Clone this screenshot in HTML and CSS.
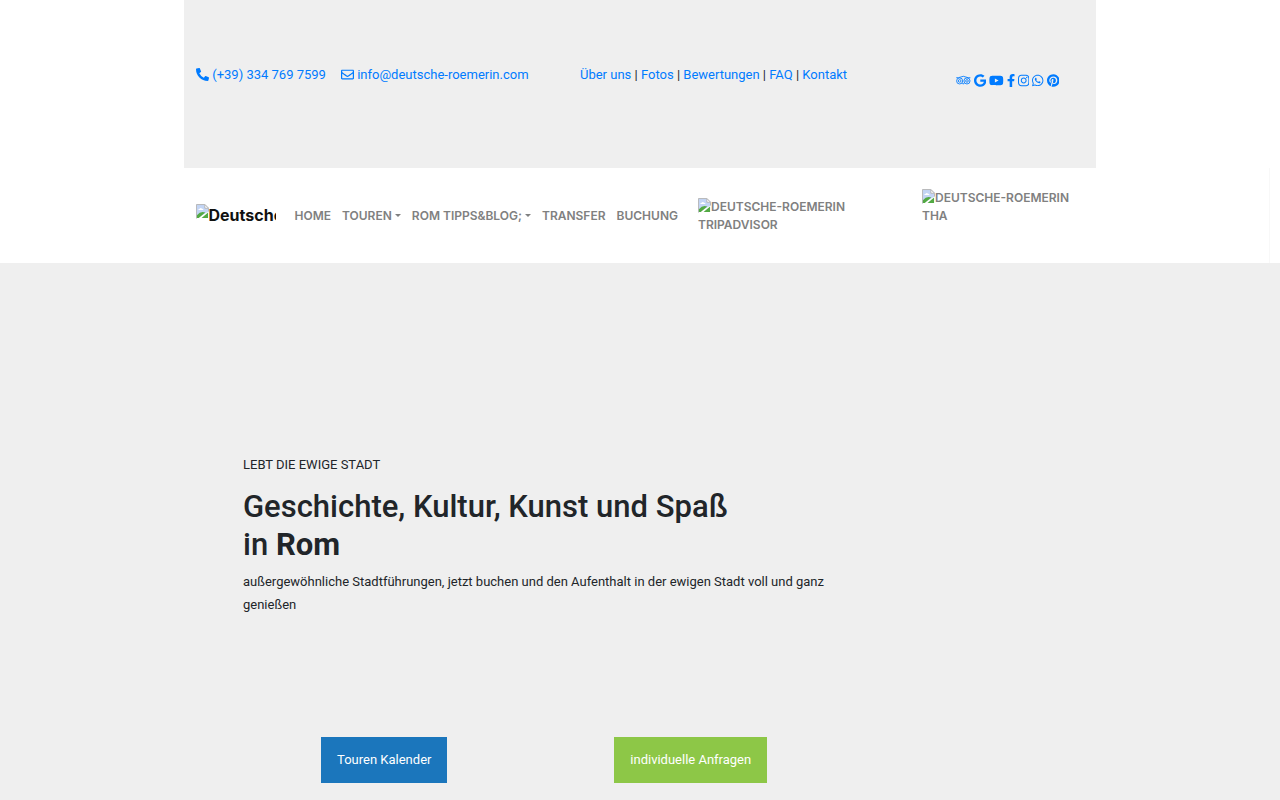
FILE: index.html
```
<!DOCTYPE html>
<html lang="de">
<head>
    <meta charset="UTF-8">
    <meta name="viewport" content="width=device-width, initial-scale=1.0">
    <title>Deutsche Roemerin</title>
    <link rel="stylesheet" href="styles.css">
</head>
<body>
    <!-- broken image symbol, used by the logo and the badges -->
    <svg class="sprite" aria-hidden="true">
        <symbol id="broken" viewBox="0 0 14 16">
            <path d="M.5 15.500V.5h9l4 4V8" fill="#c3d5f5" stroke="#b4b4b4"/>
            <path d="M2.500 6.500q0-1.500 1.500-1.500 1-1.500 2.500 0 1.500 0 1.500 1.500z" fill="#fff"/>
            <path d="M1 15v-3q4-5 9-3l-7 6z" fill="#52a943"/>
            <path d="M9.500.5v4h4z" fill="#fff" stroke="#b4b4b4"/>
            <path d="M6 15l7-6v6z" fill="#52a943"/>
        </symbol>
    </svg>

    <div class="container topbar">
        <div class="contact">
            <a href="tel:+393347697599"><svg class="icon" viewBox="0 0 512 512"><path d="M497.390 361.800l-112-48a24 24 0 0 0-28 6.900l-49.600 60.600A370.660 370.660 0 0 1 130.600 204.110l60.600-49.600a23.940 23.940 0 0 0 6.900-28l-48-112A24.160 24.160 0 0 0 122.600.61l-104 24A24 24 0 0 0 0 48c0 256.500 207.900 464 464 464a24 24 0 0 0 23.400-18.600l24-104a24.290 24.290 0 0 0-14.010-27.600z"/></svg> (+39) 334 769 7599</a>
            <a href="mailto:info@deutsche-roemerin.com"><svg class="icon" viewBox="0 0 512 512"><path d="M464 64H48C21.490 64 0 85.490 0 112v288c0 26.510 21.490 48 48 48h416c26.510 0 48-21.490 48-48V112c0-26.510-21.490-48-48-48zm0 48v40.805c-22.422 18.259-58.168 46.651-134.587 106.490-16.841 13.247-50.201 45.072-73.413 44.701-23.208.375-56.579-31.459-73.413-44.701C106.180 199.465 70.425 171.067 48 152.805V112h416zM48 400V214.398c22.914 18.251 55.409 43.862 104.938 82.646 21.857 17.205 60.134 55.186 103.062 54.955 42.717.231 80.509-37.199 103.053-54.947 49.528-38.783 82.032-64.401 104.947-82.653V400H48z"/></svg> info@deutsche-roemerin.com</a>
        </div>
        <div class="links">
            <a href="#">Über uns</a> | <a href="#">Fotos</a> | <a href="#">Bewertungen</a> | <a href="#">FAQ</a> | <a href="#">Kontakt</a>
        </div>
        <div class="social">
            <a href="#" aria-label="Tripadvisor"><svg class="icon" viewBox="0 0 576 512"><g fill="none" stroke="currentColor" stroke-width="34"><circle cx="144" cy="273" r="120"/><circle cx="432" cy="273" r="120"/><circle cx="144" cy="273" r="52"/><circle cx="432" cy="273" r="52"/><path d="M10 146h85q193-110 386 0h85M250 350l38 52 38-52"/></g></svg></a>
            <a href="#" aria-label="Google"><svg class="icon" viewBox="0 0 488 512"><path d="M488 261.800C488 403.300 391.100 504 248 504 110.800 504 0 393.200 0 256S110.800 8 248 8c66.800 0 123 24.500 166.300 64.900l-67.500 64.900C258.500 52.600 94.300 116.600 94.300 256c0 86.500 69.100 156.600 153.700 156.600 98.200 0 135-70.400 140.800-106.900H248v-85.300h236.100c2.300 12.700 3.900 24.900 3.900 41.400z"/></svg></a>
            <a href="#" aria-label="YouTube"><svg class="icon" viewBox="0 0 576 512"><path d="M549.655 124.083c-6.281-23.650-24.787-42.276-48.284-48.597C458.781 64 288 64 288 64S117.220 64 74.629 75.486c-23.497 6.322-42.003 24.947-48.284 48.597-11.412 42.867-11.412 132.305-11.412 132.305s0 89.438 11.412 132.305c6.281 23.650 24.787 41.500 48.284 47.821C117.220 448 288 448 288 448s170.780 0 213.371-11.486c23.497-6.321 42.003-24.171 48.284-47.821 11.412-42.867 11.412-132.305 11.412-132.305s0-89.438-11.412-132.305zm-317.510 213.508V175.185l142.739 81.205-142.739 81.201z"/></svg></a>
            <a href="#" aria-label="Facebook"><svg class="icon" viewBox="0 0 320 512"><path d="M279.140 288l14.220-92.660h-88.910v-60.130c0-25.350 12.420-50.060 52.240-50.060h40.420V6.260S260.430 0 225.360 0c-73.220 0-121.080 44.380-121.080 124.720v70.620H22.890V288h81.390v224h100.170V288z"/></svg></a>
            <a href="#" aria-label="Instagram"><svg class="icon" viewBox="0 0 448 512"><path d="M224.100 141c-63.600 0-114.900 51.300-114.900 114.900s51.300 114.900 114.900 114.900S339 319.500 339 255.900 287.700 141 224.100 141zm0 189.600c-41.100 0-74.700-33.500-74.700-74.700s33.500-74.700 74.700-74.700 74.700 33.500 74.700 74.700-33.600 74.700-74.700 74.700zm146.400-194.300c0 14.900-12 26.800-26.800 26.800-14.900 0-26.800-12-26.800-26.800s12-26.800 26.800-26.800 26.800 12 26.800 26.800zm76.100 27.200c-1.700-35.900-9.900-67.700-36.200-93.900-26.200-26.200-58-34.400-93.900-36.200-37-2.100-147.900-2.100-184.900 0-35.800 1.700-67.600 9.900-93.900 36.100s-34.400 58-36.200 93.900c-2.100 37-2.100 147.900 0 184.900 1.700 35.900 9.900 67.700 36.200 93.900s58 34.400 93.900 36.200c37 2.100 147.900 2.100 184.900 0 35.900-1.700 67.700-9.900 93.900-36.200 26.200-26.200 34.400-58 36.200-93.900 2.100-37 2.100-147.800 0-184.800zM398.800 388c-7.800 19.600-22.900 34.700-42.600 42.600-29.500 11.700-99.500 9-132.100 9s-102.700 2.600-132.100-9c-19.600-7.800-34.700-22.900-42.600-42.600-11.700-29.500-9-99.500-9-132.100s-2.600-102.700 9-132.100c7.800-19.600 22.900-34.700 42.600-42.600 29.500-11.700 99.500-9 132.100-9s102.700-2.600 132.100 9c19.600 7.800 34.700 22.900 42.600 42.600 11.700 29.500 9 99.500 9 132.100s2.700 102.700-9 132.100z"/></svg></a>
            <a href="#" aria-label="WhatsApp"><svg class="icon" viewBox="0 0 448 512"><path d="M380.900 97.100C339 55.100 283.200 32 223.900 32c-122.400 0-222 99.600-222 222 0 39.100 10.200 77.300 29.600 111L0 480l117.700-30.900c32.400 17.700 68.900 27 106.100 27h.1c122.300 0 224.100-99.600 224.100-222 0-59.300-25.200-115-67.100-157zm-157 341.600c-33.200 0-65.700-8.900-94-25.700l-6.700-4-69.800 18.300L72 359.200l-4.400-7c-18.500-29.400-28.200-63.300-28.200-98.200 0-101.700 82.800-184.500 184.600-184.500 49.300 0 95.600 19.200 130.400 54.100 34.800 34.900 56.200 81.200 56.100 130.500 0 101.800-84.900 184.600-186.600 184.600zm101.200-138.200c-5.500-2.800-32.800-16.200-37.900-18-5.100-1.900-8.800-2.800-12.500 2.800-3.700 5.600-14.300 18-17.600 21.800-3.200 3.700-6.500 4.200-12 1.400-32.600-16.300-54-29.100-75.500-66-5.700-9.800 5.700-9.100 16.300-30.300 1.800-3.700.9-6.900-.5-9.700-1.400-2.800-12.500-30.100-17.100-41.200-4.500-10.800-9.100-9.300-12.500-9.500-3.200-.2-6.900-.2-10.600-.2-3.700 0-9.700 1.400-14.800 6.900-5.100 5.600-19.400 19-19.400 46.300 0 27.300 19.900 53.700 22.600 57.400 2.800 3.700 39.100 59.700 94.800 83.800 35.200 15.200 49 16.500 66.600 13.900 10.700-1.600 32.800-13.400 37.400-26.400 4.600-13 4.600-24.100 3.200-26.400-1.300-2.500-5-3.900-10.500-6.600z"/></svg></a>
            <a href="#" aria-label="Pinterest"><svg class="icon" viewBox="0 0 496 512"><path d="M496 256c0 137-111 248-248 248-25.600 0-50.200-3.900-73.400-11.100 10.100-16.500 25.200-43.500 30.800-65 3-11.600 15.400-59 15.400-59 8.100 15.400 31.700 28.500 56.800 28.500 74.800 0 128.700-68.800 128.700-154.300 0-81.900-66.900-143.200-152.900-143.200-107 0-163.900 71.800-163.900 150.100 0 36.400 19.400 81.700 50.300 96.100 4.700 2.200 7.200 1.200 8.300-3.300.8-3.400 5-20.300 6.900-28.100.6-2.500.3-4.700-1.700-7.100-10.100-12.500-18.300-35.300-18.300-56.600 0-54.700 41.400-107.600 112-107.600 60.900 0 103.600 41.500 103.600 100.900 0 67.100-33.900 113.600-78 113.600-24.300 0-42.600-20.100-36.700-44.800 7-29.500 20.500-61.300 20.500-82.600 0-19-10.200-34.900-31.400-34.900-24.900 0-44.900 25.700-44.900 60.200 0 22 7.400 36.800 7.400 36.800s-24.500 103.800-29 123.200c-5 21.400-3 51.600-.9 71.200C65.400 450.900 0 361.100 0 256 0 119 111 8 248 8s248 111 248 248z"/></svg></a>
        </div>
    </div>

    <header class="header">
        <nav class="container navbar">
            <a class="brand" href="#"><svg class="broken"><use href="#broken"/></svg>Deutsche</a>
            <ul class="menu">
                <li><a href="#">Home</a></li>
                <li><a class="dropdown" href="#">Touren</a></li>
                <li><a class="dropdown" href="#">Rom Tipps&amp;Blog;</a></li>
                <li><a href="#">Transfer</a></li>
                <li><a href="#">Buchung</a></li>
            </ul>
            <a class="badge" href="#"><svg class="broken"><use href="#broken"/></svg>Deutsche-Roemerin Tripadvisor</a>
            <a class="badge badge-top" href="#"><svg class="broken"><use href="#broken"/></svg>Deutsche-Roemerin THA</a>
        </nav>
    </header>

    <main class="hero">
        <div class="container">
            <div class="hero-text">
                <p class="subtitle">LEBT DIE EWIGE STADT</p>
                <h1>Geschichte, Kultur, Kunst und Spaß<br>in <strong>Rom</strong></h1>
                <p class="intro">außergewöhnliche Stadtführungen, jetzt buchen und den Aufenthalt in der ewigen Stadt voll und ganz genießen</p>
                <div class="buttons">
                    <a class="btn btn-blue" href="#">Touren Kalender</a>
                    <a class="btn btn-green" href="#">individuelle Anfragen</a>
                </div>
            </div>
        </div>
    </main>
</body>
</html>
```
FILE: styles.css
```
* {
    box-sizing: border-box;
}
body {
    margin: 0;
    font-family: Roboto, "Liberation Sans", sans-serif;
    font-size: 13px;
    line-height: 23px;
    color: #212529;
    background: #fff;
}
a {
    color: #007bff;
    text-decoration: none;
}
.sprite {
    display: none;
}
.container {
    width: 100%;
    max-width: 912px;
    margin: 0 auto;
    padding: 0 12px;
}
.icon {
    height: 13px;
    fill: currentColor;
    vertical-align: -2px;
}
.topbar {
    display: grid;
    grid-template-columns: 384px 376px 1fr;
    padding-top: 63px;
    padding-bottom: 76px;
    background: #efefef;
}
.contact {
    display: flex;
    gap: 15px;
}
.social {
    display: flex;
    gap: 3px;
    padding-top: 6px;
}

.header {
    margin-right: 10px;
    padding-left: 10px;
    border-right: 1px solid #f8f8f8;
}
.navbar {
    display: flex;
    align-items: center;
    height: 95px;
    font-family: Inter, "Liberation Sans", sans-serif;
}
.brand {
    width: 80px;
    margin-right: 19px;
    overflow: hidden;
    white-space: nowrap;
    font-size: 16px;
    font-weight: 700;
    color: #111;
}
.broken {
    width: 13px;
    height: 15px;
    vertical-align: -2px;
}
.brand .broken {
    vertical-align: 2px;
}
.menu {
    display: flex;
    gap: 11px;
    margin: 0;
    padding: 0;
    list-style: none;
    white-space: nowrap;
}
.menu a, .badge {
    font-size: 12px;
    line-height: 18px;
    font-weight: 600;
    text-transform: uppercase;
    color: #808080;
}
.dropdown::after {
    content: "";
    display: inline-block;
    margin-left: 3px;
    vertical-align: 3px;
    border-top: 3px solid;
    border-left: 3px solid transparent;
    border-right: 3px solid transparent;
}
.badge {
    width: 160px;
    margin-left: 20px;
}
.badge-top {
    margin-left: 64px;
    margin-bottom: 18px;
}

.hero {
    min-height: 537px;
    padding: 190px 0 17px;
    background: #efefef;
}
.hero-text {
    max-width: 636px;
    padding-left: 47px;
}
.subtitle {
    margin: 0 0 12px;
}
h1 {
    margin: 0 0 6px;
    font-size: 31px;
    line-height: 38px;
    font-weight: 500;
}
h1 strong {
    font-weight: 700;
}
.intro {
    margin: 0;
}
.buttons {
    display: grid;
    grid-template-columns: 1fr 1fr;
    gap: 24px;
    justify-items: center;
    padding-top: 121px;
}
.btn {
    padding: 12px 16px;
    line-height: 22px;
    color: #fff;
}
.btn-blue {
    background: #1b76bc;
}
.btn-green {
    background: #8dc747;
}
```
